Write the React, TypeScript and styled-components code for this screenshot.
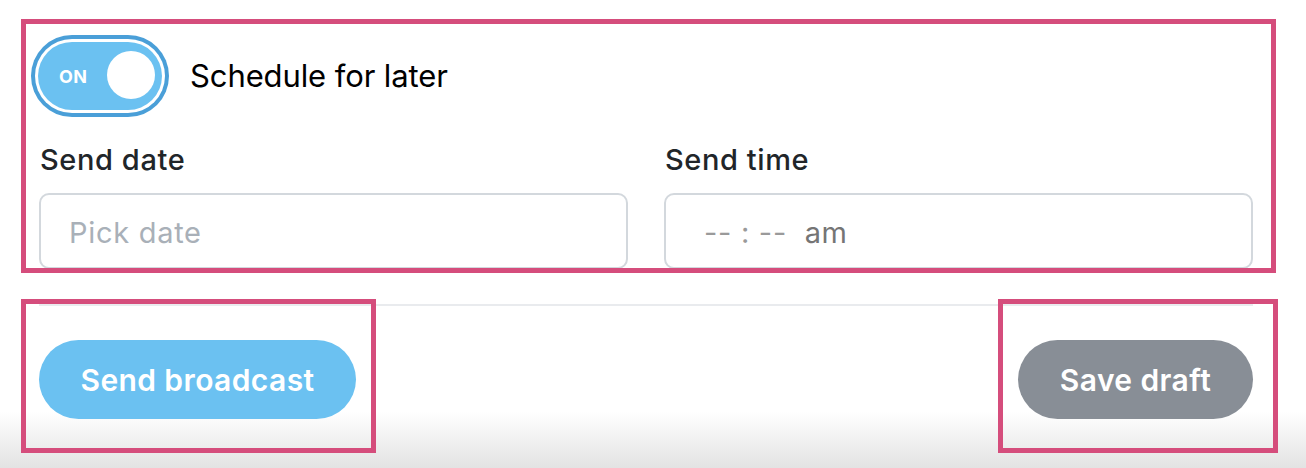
import React from "react";
import styled, { createGlobalStyle } from "styled-components";

const GlobalStyle = createGlobalStyle`
  html, body { margin: 0; padding: 0; }
  body {
    width: 1306px;
    min-height: 468px;
    font-family: Inter, "Noto Sans", "Liberation Sans", sans-serif;
    background: linear-gradient(to bottom, #ffffff 0, #ffffff 412px, #e3e3e3 468px);
    overflow: hidden;
  }
`;

const Page = styled.div`
  height: 468px;
  padding: 0 53px 0 39px;
  box-sizing: border-box;
  display: flex;
  flex-direction: column;
`;

const Section = styled.div`
  position: relative;
`;

const Highlight = styled.div<{ $t: number; $r: number; $b: number; $l: number }>`
  position: absolute;
  top: ${(p) => p.$t}px;
  right: ${(p) => p.$r}px;
  bottom: ${(p) => p.$b}px;
  left: ${(p) => p.$l}px;
  border: 5px solid #d54d7c;
  pointer-events: none;
  z-index: 2;
`;

const ScheduleSection = styled(Section)`
  padding-top: 42px;
  display: flex;
  flex-direction: column;
`;

const ToggleRow = styled.div`
  display: flex;
  align-items: center;
  gap: 28px;
  height: 68px;
  margin-left: -1px;
`;

const Toggle = styled.div`
  width: 124px;
  height: 68px;
  border-radius: 34px;
  background: #6bc1f1;
  box-shadow: 0 0 0 3px #ffffff, 0 0 0 7px #4a9fd8;
  display: flex;
  align-items: center;
  justify-content: space-between;
  padding: 0 7px 0 21px;
  box-sizing: border-box;
`;

const ToggleText = styled.span`
  color: #ffffff;
  font-weight: 700;
  font-size: 18px;
  letter-spacing: 0.3px;
`;

const Knob = styled.span`
  width: 48px;
  height: 48px;
  border-radius: 50%;
  background: #ffffff;
  margin-top: -2px;
`;

const ToggleLabel = styled.span`
  font-size: 31px;
  color: #000000;
  font-weight: 400;
  line-height: 40px;
  letter-spacing: -0.1px;
`;

const Fields = styled.div`
  display: grid;
  grid-template-columns: 1fr 1fr;
  column-gap: 36px;
  margin-top: 33px;
`;

const Field = styled.div`
  display: flex;
  flex-direction: column;
`;

const Label = styled.label`
  font-size: 29px;
  line-height: 34px;
  color: #212529;
  font-weight: 500;
  letter-spacing: 0.6px;
  margin-bottom: 16px;
  padding-left: 1px;
`;

const InputBox = styled.div<{ $indent: number; $muted?: boolean }>`
  height: 76px;
  box-sizing: border-box;
  border: 2px solid #d3d8dd;
  border-radius: 10px;
  display: flex;
  align-items: center;
  padding-left: ${(p) => p.$indent}px;
  padding-top: 3px;
  font-size: 29px;
  letter-spacing: 0.7px;
  color: ${(p) => (p.$muted ? "#a9b0b8" : "#757575")};
  white-space: pre;
`;

const Dashes = styled.span`
  color: #9a9a9a;
`;

const Divider = styled.div`
  height: 2px;
  background: #e9ebee;
  margin-top: 35px;
`;

const Actions = styled.div`
  display: flex;
  justify-content: space-between;
  margin-top: 34px;
`;

const Button = styled.button<{ $bg: string; $w: number }>`
  width: ${(p) => p.$w}px;
  height: 79px;
  border: none;
  border-radius: 40px;
  background: ${(p) => p.$bg};
  color: #ffffff;
  font-family: Inter, "Noto Sans", "Liberation Sans", sans-serif;
  font-size: 30px;
  font-weight: 600;
  letter-spacing: 0.4px;
  padding: 0;
  cursor: pointer;
`;

export default function App() {
  return (
    <>
      <GlobalStyle />
      <Page>
        <ScheduleSection>
          <Highlight $t={19} $r={-23} $b={-4} $l={-18} />
          <ToggleRow>
            <Toggle>
              <ToggleText>ON</ToggleText>
              <Knob />
            </Toggle>
            <ToggleLabel>Schedule for later</ToggleLabel>
          </ToggleRow>
          <Fields>
            <Field>
              <Label>Send date</Label>
              <InputBox $indent={28} $muted>Pick date</InputBox>
            </Field>
            <Field>
              <Label>Send time</Label>
              <InputBox $indent={38}>
                <Dashes>{"-- : --  "}</Dashes>am
              </InputBox>
            </Field>
          </Fields>
        </ScheduleSection>
        <Divider />
        <Actions>
          <Section>
            <Highlight $t={-41} $r={-20} $b={-34} $l={-18} />
            <Button $bg="#6bc1f1" $w={317}>Send broadcast</Button>
          </Section>
          <Section>
            <Highlight $t={-41} $r={-25} $b={-34} $l={-20} />
            <Button $bg="#888e96" $w={235}>Save draft</Button>
          </Section>
        </Actions>
      </Page>
    </>
  );
}
